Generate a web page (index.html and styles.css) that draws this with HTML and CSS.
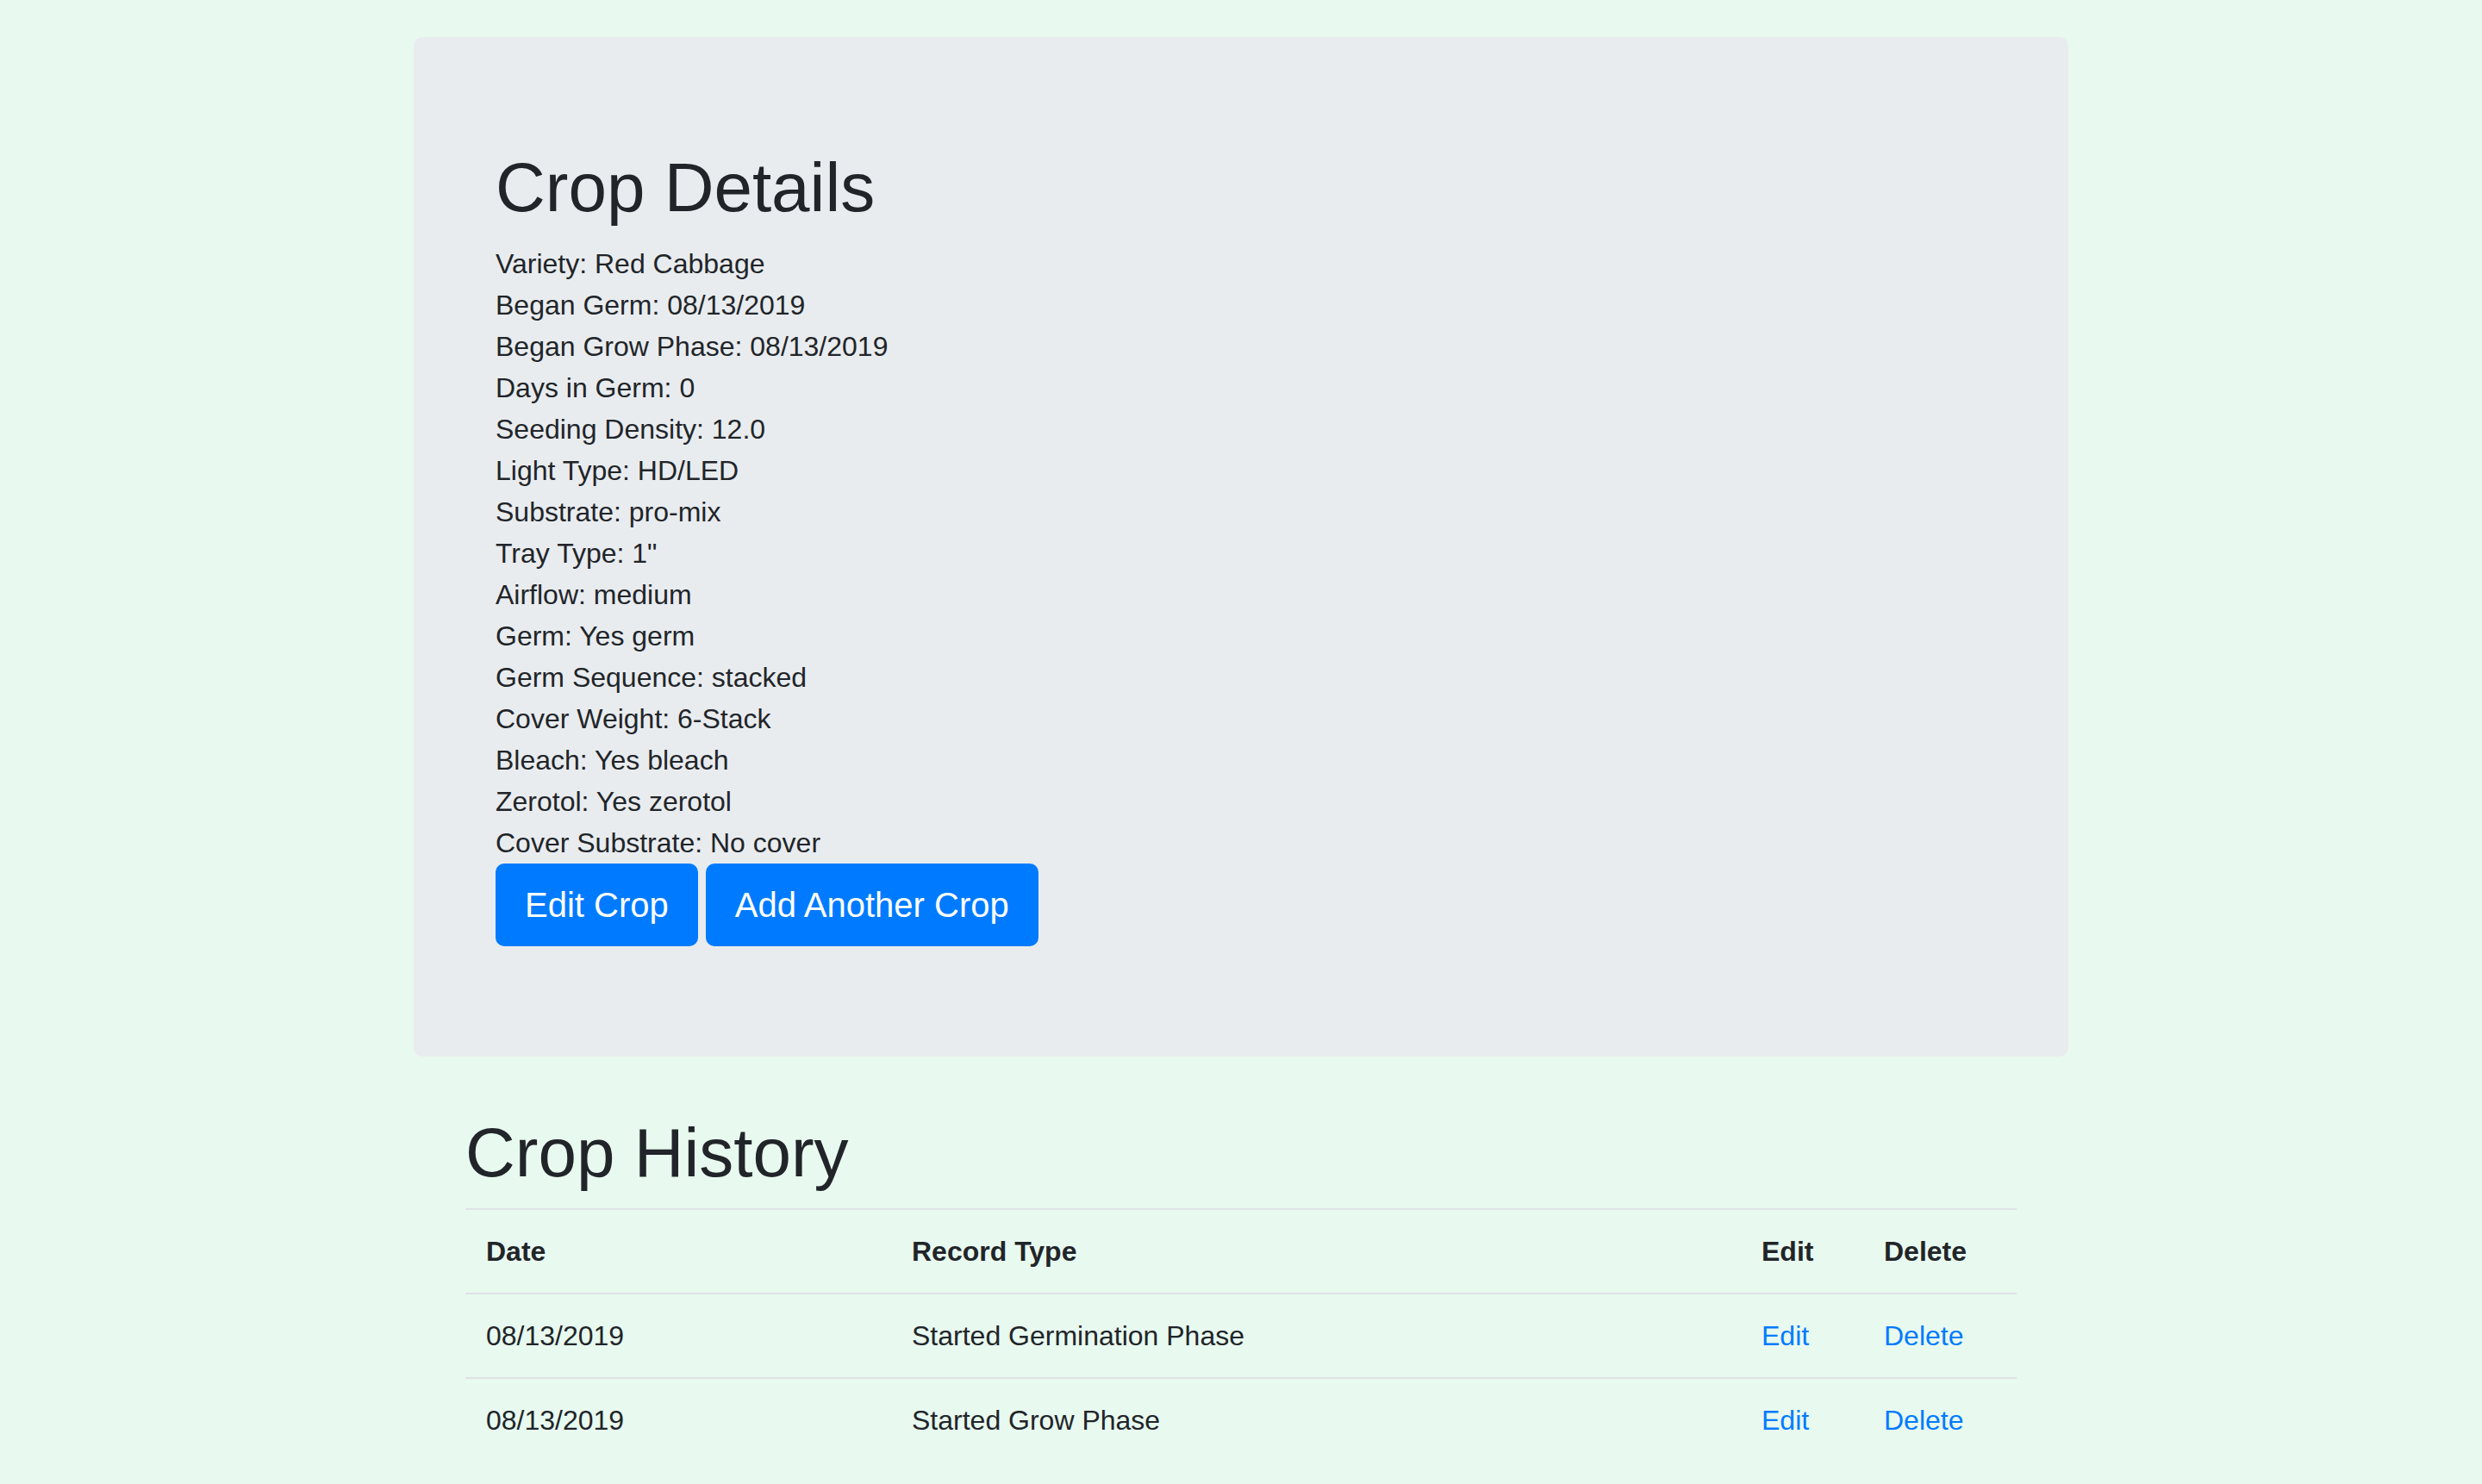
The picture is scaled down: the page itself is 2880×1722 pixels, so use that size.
FILE: index.html
```html
<!DOCTYPE html>
<html lang="en">
<head>
<meta charset="utf-8">
<title>Crop Details</title>
<link rel="stylesheet" href="styles.css">
</head>
<body>
<div class="page">
  <section class="jumbotron">
    <h1 class="title">Crop Details</h1>
    <ul class="detail-list">
      <li>Variety: Red Cabbage</li>
      <li>Began Germ: 08/13/2019</li>
      <li>Began Grow Phase: 08/13/2019</li>
      <li>Days in Germ: 0</li>
      <li>Seeding Density: 12.0</li>
      <li>Light Type: HD/LED</li>
      <li>Substrate: pro-mix</li>
      <li>Tray Type: 1"</li>
      <li>Airflow: medium</li>
      <li>Germ: Yes germ</li>
      <li>Germ Sequence: stacked</li>
      <li>Cover Weight: 6-Stack</li>
      <li>Bleach: Yes bleach</li>
      <li>Zerotol: Yes zerotol</li>
      <li>Cover Substrate: No cover</li>
    </ul>
    <div class="actions">
      <a class="btn" href="#">Edit Crop</a>
      <a class="btn" href="#">Add Another Crop</a>
    </div>
  </section>
  <section class="history">
    <h1 class="title">Crop History</h1>
    <table class="table">
      <thead>
        <tr>
          <th class="col-date">Date</th>
          <th class="col-type">Record Type</th>
          <th class="col-edit">Edit</th>
          <th class="col-delete">Delete</th>
        </tr>
      </thead>
      <tbody>
        <tr>
          <td>08/13/2019</td>
          <td>Started Germination Phase</td>
          <td><a class="link" href="#">Edit</a></td>
          <td><a class="link" href="#">Delete</a></td>
        </tr>
        <tr>
          <td>08/13/2019</td>
          <td>Started Grow Phase</td>
          <td><a class="link" href="#">Edit</a></td>
          <td><a class="link" href="#">Delete</a></td>
        </tr>
      </tbody>
    </table>
  </section>
</div>
</body>
</html>
```
FILE: styles.css
```css
html, body {
  margin: 0;
  padding: 0;
}
body {
  background: #e8f9ef;
  font-family: "Liberation Sans", Arial, Helvetica, sans-serif;
  font-size: 32px;
  line-height: 48px;
  color: #212529;
}
.page {
  width: 1920px;
  margin: 0 auto;
  padding-top: 43px;
}
.jumbotron {
  background: #e9ecef;
  border-radius: 10px;
  padding: 127px 95px 128px;
  margin-bottom: 64px;
}
.title {
  font-size: 80px;
  line-height: 96px;
  font-weight: 500;
  margin: 0 0 16px;
}
.detail-list {
  list-style: none;
  margin: 0;
  padding: 0;
}
.actions {
  display: flex;
  gap: 9px;
}
.btn {
  display: inline-block;
  font-size: 40px;
  line-height: 60px;
  padding: 16px 32px;
  border: 2px solid #007bff;
  background: #007bff;
  color: #fff;
  border-radius: 10px;
  text-decoration: none;
}
.history {
  padding: 0 60px;
}
.table {
  width: 1800px;
  border-collapse: collapse;
  table-layout: fixed;
}
.table th,
.table td {
  box-sizing: border-box;
  padding: 24px;
  border-top: 2px solid #dee2e6;
  text-align: left;
  vertical-align: top;
}
.table th {
  font-weight: 700;
}
.col-date { width: 494px; }
.col-type { width: 986px; }
.col-edit { width: 142px; }
.col-delete { width: 178px; }
.link {
  color: #007bff;
  text-decoration: none;
}
```
